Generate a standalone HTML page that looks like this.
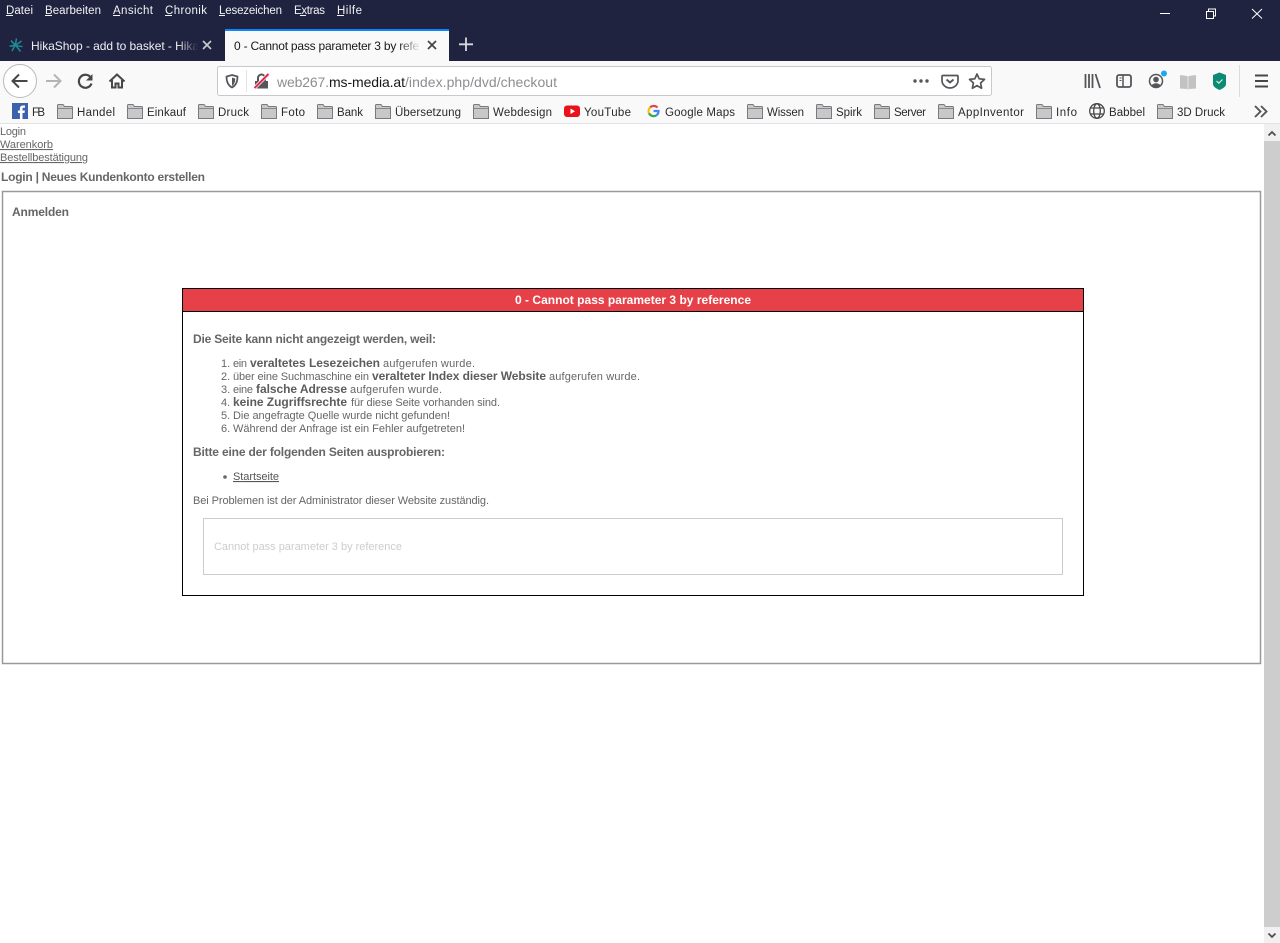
<!DOCTYPE html>
<html lang="de">
<head>
<meta charset="utf-8">
<title>0 - Cannot pass parameter 3 by reference</title>
<style>
html,body{margin:0;padding:0;background:#fff;width:1280px;height:943px;overflow:hidden}
svg{display:block;position:absolute;left:0;top:0}
text{font-family:"Liberation Sans",Arial,sans-serif;white-space:pre}
.m{font-size:11.5px;fill:#f2f2f5}
.b{font-size:11.5px;fill:#2a2a2e}
.p{font-size:11px;fill:#666}
.h{font-size:12px;font-weight:bold;fill:#666}
.pb{font-size:12px;font-weight:bold;fill:#5c5c5c}
</style>
</head>
<body>
<svg width="1280" height="943" viewBox="0 0 1280 943" xmlns="http://www.w3.org/2000/svg">
<defs>
<linearGradient id="f1" x1="0" x2="1" y1="0" y2="0"><stop offset="0" stop-color="#20233f" stop-opacity="0"/><stop offset="1" stop-color="#20233f"/></linearGradient>
<linearGradient id="f2" x1="0" x2="1" y1="0" y2="0"><stop offset="0" stop-color="#f9f9fa" stop-opacity="0"/><stop offset="1" stop-color="#f9f9fa"/></linearGradient>
<g id="fd"><path d="M.5 14.500V1.500q0-1 1-1h4.500l1.500 2h7q1 0 1 1v11z" fill="#c8c8ca" stroke="#7a7a7d" stroke-width="1"/><path d="M1 4.500h14" stroke="#88888b" stroke-width="1"/></g>
</defs>

<!-- title bar + tabs -->
<rect width="1280" height="61" fill="#20233f"/>
<text class="m" x="6" y="14" textLength="27">Datei</text><path d="M6 15.500h7" stroke="#f2f2f5"/>
<text class="m" x="45" y="14" textLength="56">Bearbeiten</text><path d="M45 15.500h7" stroke="#f2f2f5"/>
<text class="m" x="113" y="14" textLength="40">Ansicht</text><path d="M113 15.500h7" stroke="#f2f2f5"/>
<text class="m" x="165" y="14" textLength="42">Chronik</text><path d="M165 15.500h7" stroke="#f2f2f5"/>
<text class="m" x="219" y="14" textLength="63">Lesezeichen</text><path d="M219 15.500h6" stroke="#f2f2f5"/>
<text class="m" x="294" y="14" textLength="31">Extras</text><path d="M300 15.500h6" stroke="#f2f2f5"/>
<text class="m" x="337" y="14" textLength="25">Hilfe</text><path d="M337 15.500h7" stroke="#f2f2f5"/>

<path d="M1160 13.500h10" stroke="#fff"/>
<path d="M1206.500 18.500h7v-7h-7zM1208.500 11v-2h7v7h-2" fill="none" stroke="#fff"/>
<path d="M1252 9l10 9.500M1262 9l-10 9.500" stroke="#fff" fill="none"/>

<!-- inactive tab -->
<g stroke="#1f8a98" stroke-width="1.500" fill="none"><path d="M16.500 38.500c-.5 3-1 4.500-1 6.500M11 40.500c1.500 2 3 3.500 4.500 4.500M21.500 41c-2 1.500-4 3-6 4M9.500 46c2 .3 4-.3 6-1M22.500 46.500c-2.500 0-5-.5-7-1.500M12 51c1-2 2.500-4.500 3.500-6M20.500 51.500c-1.500-2-3.500-4.500-5-6.500"/></g>
<text x="31" y="50" font-size="12" fill="#eeeef2" textLength="168">HikaShop - add to basket - Hika</text>
<rect x="178" y="36" width="20" height="20" fill="url(#f1)"/>
<rect x="198" y="36" width="4" height="20" fill="#20233f"/>
<path d="M203 41l8 8M211 41l-8 8" stroke="#c8c8ce" stroke-width="1.700"/>

<!-- active tab -->
<rect x="225" y="29" width="224" height="32" fill="#f9f9fa"/>
<rect x="225" y="29" width="224" height="2" fill="#0a84ff"/>
<text x="234" y="50" font-size="12" fill="#18181a" textLength="189">0 - Cannot pass parameter 3 by refer</text>
<rect x="398" y="36" width="23" height="20" fill="url(#f2)"/>
<rect x="419" y="36" width="6" height="20" fill="#f9f9fa"/>
<path d="M428 41l8 8M436 41l-8 8" stroke="#444" stroke-width="1.700"/>
<path d="M466 37.500v13.500M459 44.300h14" stroke="#d8d8de" stroke-width="1.800"/>

<!-- toolbar -->
<rect y="61" width="1280" height="63" fill="#f9f9fa"/>
<rect y="123" width="1280" height="1" fill="#e2e2e4"/>

<circle cx="20" cy="81" r="16.500" fill="#fff" stroke="#b9b9bb"/>
<path d="M27.500 81H13M19 74.500L12.500 81l6.500 6.500" fill="none" stroke="#47474a" stroke-width="2"/>
<path d="M60.500 81H46M54 74.500L60.500 81 54 87.500" fill="none" stroke="#b4b4b6" stroke-width="2"/>
<path d="M91 78A6.500 6.500 0 1 0 91.500 83.500" fill="none" stroke="#47474a" stroke-width="2.200"/>
<path d="M92.500 74v6.500h-6.500z" fill="#47474a"/>
<path d="M109.500 81.500l7.500-7 7.500 7M112 80v7.500h3.500v-4h3v4h3.500V80" fill="none" stroke="#47474a" stroke-width="2"/>

<!-- URL bar -->
<rect x="217.500" y="66.500" width="774" height="29" rx="2" fill="#fff" stroke="#c9c9cb"/>
<path d="M232 75l5.500 1.500c0 5.500-1.500 9-5.500 11-4-2-5.500-5.500-5.500-11z" fill="none" stroke="#55555a" stroke-width="1.700"/>
<path d="M232 77.500l3.200 1c0 3.500-1 6-3.200 7.500z" fill="#55555a"/>
<rect x="246" y="70" width="1" height="22" fill="#e4e4e6"/>
<path d="M255 88.500v-7.500h13v7.500z" fill="#55555a"/>
<path d="M258 81v-3a3.500 3.500 0 0 1 7 0v3" fill="none" stroke="#55555a" stroke-width="2"/>
<path d="M254.500 88l14.500-14.500" stroke="#f9f9fa" stroke-width="3.500"/>
<path d="M254.500 88l14-14" stroke="#e22850" stroke-width="2"/>
<text x="277" y="87" font-size="14" fill="#8e8e92" textLength="52">web267.</text>
<text x="329" y="87" font-size="14" fill="#17171a" textLength="76">ms-media.at</text>
<text x="405" y="87" font-size="14" fill="#8e8e92" textLength="152">/index.php/dvd/checkout</text>
<g fill="#55555a"><circle cx="915" cy="81" r="1.700"/><circle cx="921" cy="81" r="1.700"/><circle cx="927" cy="81" r="1.700"/></g>
<path d="M943 75.500h14q1 0 1 1v4a8 7.500 0 0 1-16 0v-4q0-1 1-1z" fill="none" stroke="#55555a" stroke-width="1.700"/>
<path d="M946.500 79.500l3.500 3 3.500-3" fill="none" stroke="#55555a" stroke-width="1.900"/>
<path d="M977 74l2.200 4.800 5.300.6-3.900 3.600 1 5.200-4.600-2.600-4.600 2.600 1-5.200-3.900-3.600 5.300-.6z" fill="none" stroke="#55555a" stroke-width="1.700" stroke-linejoin="round"/>

<!-- right toolbar -->
<path d="M1085.500 74v14M1089 74v14M1092.500 74v14M1095.500 74l4.500 14" stroke="#55555a" stroke-width="1.800" fill="none"/>
<rect x="1117" y="75" width="14" height="12" rx="2" fill="none" stroke="#55555a" stroke-width="1.800"/>
<path d="M1123 75v12" stroke="#55555a" stroke-width="1.500"/>
<path d="M1119.500 78h2M1119.500 80.500h2" stroke="#55555a"/>
<circle cx="1156" cy="81" r="6.500" fill="none" stroke="#55555a" stroke-width="1.500"/>
<circle cx="1156" cy="79.500" r="2.800" fill="#55555a"/>
<path d="M1151 85.500q5-4.500 10 0l-2 1.800h-6z" fill="#55555a"/>
<circle cx="1164" cy="73.500" r="3" fill="#1ea7f5"/>
<path d="M1180 75l7 1 1 .5 1-.5 7-1v13.500l-7 .5-1 .5-1-.5-7-.5z" fill="#c2c2c4"/>
<path d="M1188 76.500v12.500" stroke="#e8e8e8"/>
<path d="M1219.500 72.500l6.500 2.500v9c0 2.500-3 4.500-6.500 6-3.500-1.500-6.500-3.500-6.500-6v-9z" fill="#0c8a72"/>
<path d="M1216.500 81l2.300 2.200 3.700-3.700" fill="none" stroke="#d8f0ea" stroke-width="1.200"/>
<rect x="1239" y="65" width="1" height="32" fill="#dcdcde"/>
<path d="M1255 75.500h13M1255 81h13M1255 86.500h13" stroke="#47474a" stroke-width="1.900"/>

<!-- bookmarks -->
<rect x="12" y="103" width="16" height="16" fill="#3b62ad"/>
<path d="M22.500 119v-6h2l.4-2.500h-2.400V109c0-.8.3-1.200 1.200-1.200h1.300v-2.300h-2c-2.200 0-3.100 1.300-3.100 3.200v1.800h-2v2.500h2v6z" fill="#fff"/>
<text class="b" x="32" y="116" textLength="13">FB</text>
<use href="#fd" x="57" y="104"/><text class="b" x="77" y="116" textLength="38">Handel</text>
<use href="#fd" x="127" y="104"/><text class="b" x="147" y="116" textLength="39">Einkauf</text>
<use href="#fd" x="198" y="104"/><text class="b" x="218" y="116" textLength="31">Druck</text>
<use href="#fd" x="261" y="104"/><text class="b" x="281" y="116" textLength="24">Foto</text>
<use href="#fd" x="317" y="104"/><text class="b" x="337" y="116" textLength="26">Bank</text>
<use href="#fd" x="375" y="104"/><text class="b" x="395" y="116" textLength="66">Übersetzung</text>
<use href="#fd" x="473" y="104"/><text class="b" x="493" y="116" textLength="59">Webdesign</text>
<rect x="564" y="105.500" width="16" height="11.500" rx="3" fill="#e8111c"/>
<path d="M570.500 108.500v5.500l4.500-2.750z" fill="#fff"/>
<text class="b" x="584" y="116" textLength="47">YouTube</text>
<g fill="none" stroke-width="2.200">
<path d="M657.500 107.500a5.300 5.300 0 0 0-7.300-.2" stroke="#ea4335"/>
<path d="M650.200 107.300a5.300 5.300 0 0 0-1.200 6" stroke="#fbbc05"/>
<path d="M649 113.300a5.300 5.300 0 0 0 7.500 2" stroke="#34a853"/>
<path d="M656.500 115.300a5.300 5.300 0 0 0 2-4.300h-5" stroke="#4285f4"/>
</g>
<text class="b" x="665" y="116" textLength="70">Google Maps</text>
<use href="#fd" x="747" y="104"/><text class="b" x="767" y="116" textLength="37">Wissen</text>
<use href="#fd" x="816" y="104"/><text class="b" x="836" y="116" textLength="26">Spirk</text>
<use href="#fd" x="874" y="104"/><text class="b" x="894" y="116" textLength="32">Server</text>
<use href="#fd" x="938" y="104"/><text class="b" x="958" y="116" textLength="66">AppInventor</text>
<use href="#fd" x="1036" y="104"/><text class="b" x="1056" y="116" textLength="21">Info</text>
<g fill="none" stroke="#47474a" stroke-width="1.300"><circle cx="1097" cy="111" r="7.300"/><ellipse cx="1097" cy="111" rx="3.300" ry="7.300"/><path d="M1090.500 108h13M1090.500 114h13"/></g>
<text class="b" x="1109" y="116" textLength="36">Babbel</text>
<use href="#fd" x="1157" y="104"/><text class="b" x="1177" y="116" textLength="48">3D Druck</text>
<path d="M1255 106l5.500 5.500-5.500 5.500M1261 106l5.500 5.500-5.500 5.500" fill="none" stroke="#55555a" stroke-width="1.900"/>

<!-- scrollbar -->
<rect x="1264" y="124" width="16" height="819" fill="#f0f0f0"/>
<rect x="1264" y="141" width="16" height="786" fill="#cdcdcd"/>
<path d="M1268.500 135.500l3.500-3.500 3.500 3.500" fill="none" stroke="#505050" stroke-width="1.800"/>
<path d="M1268.500 933.500l3.500 3.500 3.500-3.500" fill="none" stroke="#505050" stroke-width="1.800"/>

<!-- page content -->
<text class="p" x="0" y="135" textLength="26">Login</text>
<text class="p" x="0" y="148" textLength="53" text-decoration="underline">Warenkorb</text>
<text class="p" x="0" y="161" textLength="88" text-decoration="underline">Bestellbestätigung</text>
<text class="h" x="1" y="181" textLength="204">Login | Neues Kundenkonto erstellen</text>

<rect x="2.500" y="191.500" width="1258" height="472" fill="#fff" stroke="#999" stroke-width="1.500"/>
<text class="h" x="12" y="216" textLength="57">Anmelden</text>

<rect x="182.500" y="288.500" width="901" height="307" fill="#fff" stroke="#000"/>
<rect x="183" y="289" width="900" height="22" fill="#e64149"/>
<rect x="183" y="311" width="900" height="1" fill="#000"/>
<text x="515" y="304" font-size="12" font-weight="bold" fill="#fff" textLength="236">0 - Cannot pass parameter 3 by reference</text>

<text class="h" x="193" y="343" textLength="243">Die Seite kann nicht angezeigt werden, weil:</text>

<text class="p" x="221" y="367">1.</text><text class="p" x="233" y="367" textLength="14">ein</text><text class="pb" x="250" y="367" textLength="130">veraltetes Lesezeichen</text><text class="p" x="383" y="367" textLength="92">aufgerufen wurde.</text>
<text class="p" x="221" y="380">2.</text><text class="p" x="233" y="380" textLength="136">über eine Suchmaschine ein</text><text class="pb" x="372" y="380" textLength="174">veralteter Index dieser Website</text><text class="p" x="549" y="380" textLength="91">aufgerufen wurde.</text>
<text class="p" x="221" y="393">3.</text><text class="p" x="233" y="393" textLength="20">eine</text><text class="pb" x="256" y="393" textLength="91">falsche Adresse</text><text class="p" x="350" y="393" textLength="92">aufgerufen wurde.</text>
<text class="p" x="221" y="406">4.</text><text class="pb" x="233" y="406" textLength="114">keine Zugriffsrechte</text><text class="p" x="351" y="406" textLength="149">für diese Seite vorhanden sind.</text>
<text class="p" x="221" y="419">5.</text><text class="p" x="233" y="419" textLength="217">Die angefragte Quelle wurde nicht gefunden!</text>
<text class="p" x="221" y="432">6.</text><text class="p" x="233" y="432" textLength="232">Während der Anfrage ist ein Fehler aufgetreten!</text>

<text class="h" x="193" y="456" textLength="252">Bitte eine der folgenden Seiten ausprobieren:</text>

<circle cx="225" cy="477" r="1.800" fill="#666"/>
<text class="p" x="233" y="480" textLength="46" style="fill:#555" text-decoration="underline">Startseite</text>

<text class="p" x="193" y="504" textLength="296">Bei Problemen ist der Administrator dieser Website zuständig.</text>

<rect x="203.500" y="518.500" width="859" height="56" fill="#fff" stroke="#ccc"/>
<text x="214" y="550" font-size="11" fill="#cdcdcd" textLength="188">Cannot pass parameter 3 by reference</text>
</svg>
</body>
</html>
